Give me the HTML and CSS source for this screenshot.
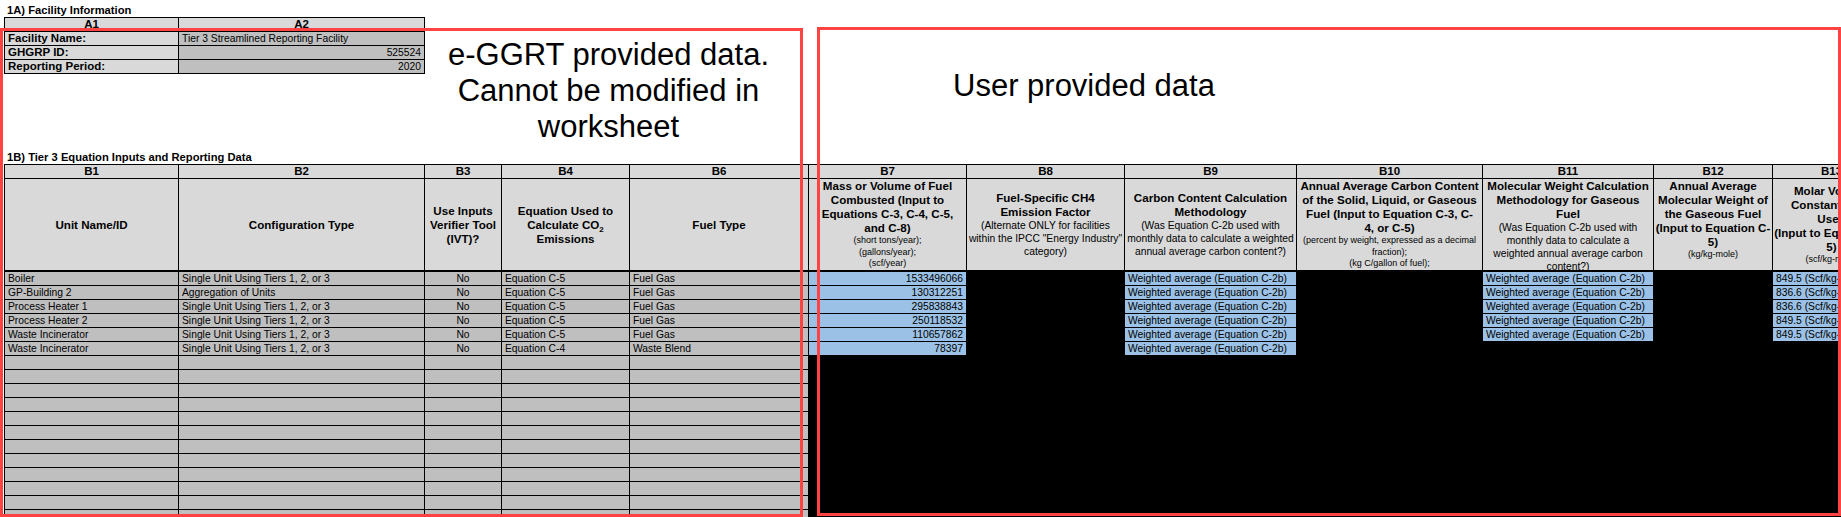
FILE: index.html
```html
<!DOCTYPE html>
<html lang="en">
<head>
<meta charset="utf-8">
<title>Tier 3 Equation Inputs and Reporting Data</title>
<link rel="stylesheet" href="styles.css">
</head>
<body>
<main class="sheet">
  <h2 class="section section-a">1A) Facility Information</h2>
  <table class="grid facility">
    <colgroup><col class="c1"><col class="c2"></colgroup>
    <tr><th class="code">A1</th><th class="code">A2</th></tr>
    <tr><th class="label">Facility Name:</th><td class="gray">Tier 3 Streamlined Reporting Facility</td></tr>
    <tr><th class="label">GHGRP ID:</th><td class="gray num">525524</td></tr>
    <tr><th class="label">Reporting Period:</th><td class="gray num">2020</td></tr>
  </table>

  <h2 class="section section-b">1B) Tier 3 Equation Inputs and Reporting Data</h2>
  <table class="grid data">
    <colgroup>
      <col class="c1"><col class="c2"><col class="c3"><col class="c4"><col class="c6"><col class="c7">
      <col class="c8"><col class="c9"><col class="c10"><col class="c11"><col class="c12"><col class="c13">
    </colgroup>
    <tr class="codes">
      <th class="code">B1</th><th class="code">B2</th><th class="code">B3</th><th class="code">B4</th><th class="code">B6</th><th class="code">B7</th>
      <th class="code">B8</th><th class="code">B9</th><th class="code">B10</th><th class="code">B11</th><th class="code">B12</th><th class="code">B13</th>
    </tr>
    <tr class="heads">
      <th><div class="head"><b>Unit Name/ID</b></div></th>
      <th><div class="head"><b>Configuration Type</b></div></th>
      <th><div class="head"><b>Use Inputs<br>Verifier Tool<br>(IVT)?</b></div></th>
      <th><div class="head"><b>Equation Used to<br>Calculate CO<sub>2</sub><br>Emissions</b></div></th>
      <th><div class="head"><b>Fuel Type</b></div></th>
      <th><div class="head top"><b>Mass or Volume of Fuel<br>Combusted (Input to<br>Equations C-3, C-4, C-5,<br>and C-8)</b><small>(short tons/year);<br>(gallons/year);<br>(scf/year)</small></div></th>
      <th><div class="head"><b>Fuel-Specific CH4<br>Emission Factor</b><span>(Alternate ONLY for facilities<br>within the IPCC "Energy Industry"<br>category)</span></div></th>
      <th><div class="head"><b>Carbon Content Calculation<br>Methodology</b><span>(Was Equation C-2b used with<br>monthly data to calculate a weighted<br>annual average carbon content?)</span></div></th>
      <th><div class="head top"><b>Annual Average Carbon Content<br>of the Solid, Liquid, or Gaseous<br>Fuel (Input to Equation C-3, C-<br>4, or C-5)</b><small>(percent by weight, expressed as a decimal<br>fraction);<br>(kg C/gallon of fuel);</small></div></th>
      <th><div class="head top"><b>Molecular Weight Calculation<br>Methodology for Gaseous<br>Fuel</b><span>(Was Equation C-2b used with<br>monthly data to calculate a<br>weighted annual average carbon<br>content?)</span></div></th>
      <th><div class="head top"><b>Annual Average<br>Molecular Weight of<br>the Gaseous Fuel<br>(Input to Equation C-<br>5)</b><small>(kg/kg-mole)</small></div></th>
      <th><div class="head"><b>Molar Volume<br>Constant to be<br>Used<br>(Input to Equation C-<br>5)</b><small>(scf/kg-mole)</small></div></th>
    </tr>
    <tr class="first">
      <td class="gray">Boiler</td><td class="gray">Single Unit Using Tiers 1, 2, or 3</td><td class="gray mid">No</td><td class="gray">Equation C-5</td><td class="gray">Fuel Gas</td>
      <td class="blue num">1533496066</td><td class="na"></td><td class="blue">Weighted average (Equation C-2b)</td><td class="na"></td><td class="blue">Weighted average (Equation C-2b)</td><td class="na"></td><td class="blue">849.5 (Scf/kg-mole)</td>
    </tr>
    <tr>
      <td class="gray">GP-Building 2</td><td class="gray">Aggregation of Units</td><td class="gray mid">No</td><td class="gray">Equation C-5</td><td class="gray">Fuel Gas</td>
      <td class="blue num">130312251</td><td class="na"></td><td class="blue">Weighted average (Equation C-2b)</td><td class="na"></td><td class="blue">Weighted average (Equation C-2b)</td><td class="na"></td><td class="blue">836.6 (Scf/kg-mole)</td>
    </tr>
    <tr>
      <td class="gray">Process Heater 1</td><td class="gray">Single Unit Using Tiers 1, 2, or 3</td><td class="gray mid">No</td><td class="gray">Equation C-5</td><td class="gray">Fuel Gas</td>
      <td class="blue num">295838843</td><td class="na"></td><td class="blue">Weighted average (Equation C-2b)</td><td class="na"></td><td class="blue">Weighted average (Equation C-2b)</td><td class="na"></td><td class="blue">836.6 (Scf/kg-mole)</td>
    </tr>
    <tr>
      <td class="gray">Process Heater 2</td><td class="gray">Single Unit Using Tiers 1, 2, or 3</td><td class="gray mid">No</td><td class="gray">Equation C-5</td><td class="gray">Fuel Gas</td>
      <td class="blue num">250118532</td><td class="na"></td><td class="blue">Weighted average (Equation C-2b)</td><td class="na"></td><td class="blue">Weighted average (Equation C-2b)</td><td class="na"></td><td class="blue">849.5 (Scf/kg-mole)</td>
    </tr>
    <tr>
      <td class="gray">Waste Incinerator</td><td class="gray">Single Unit Using Tiers 1, 2, or 3</td><td class="gray mid">No</td><td class="gray">Equation C-5</td><td class="gray">Fuel Gas</td>
      <td class="blue num">110657862</td><td class="na"></td><td class="blue">Weighted average (Equation C-2b)</td><td class="na"></td><td class="blue">Weighted average (Equation C-2b)</td><td class="na"></td><td class="blue">849.5 (Scf/kg-mole)</td>
    </tr>
    <tr>
      <td class="gray">Waste Incinerator</td><td class="gray">Single Unit Using Tiers 1, 2, or 3</td><td class="gray mid">No</td><td class="gray">Equation C-4</td><td class="gray">Waste Blend</td>
      <td class="blue num">78397</td><td class="na"></td><td class="blue">Weighted average (Equation C-2b)</td><td class="na" colspan="4"></td>
    </tr>
    <tr><td class="gray"></td><td class="gray"></td><td class="gray"></td><td class="gray"></td><td class="gray"></td><td class="na" colspan="7"></td></tr>
    <tr><td class="gray"></td><td class="gray"></td><td class="gray"></td><td class="gray"></td><td class="gray"></td><td class="na" colspan="7"></td></tr>
    <tr><td class="gray"></td><td class="gray"></td><td class="gray"></td><td class="gray"></td><td class="gray"></td><td class="na" colspan="7"></td></tr>
    <tr><td class="gray"></td><td class="gray"></td><td class="gray"></td><td class="gray"></td><td class="gray"></td><td class="na" colspan="7"></td></tr>
    <tr><td class="gray"></td><td class="gray"></td><td class="gray"></td><td class="gray"></td><td class="gray"></td><td class="na" colspan="7"></td></tr>
    <tr><td class="gray"></td><td class="gray"></td><td class="gray"></td><td class="gray"></td><td class="gray"></td><td class="na" colspan="7"></td></tr>
    <tr><td class="gray"></td><td class="gray"></td><td class="gray"></td><td class="gray"></td><td class="gray"></td><td class="na" colspan="7"></td></tr>
    <tr><td class="gray"></td><td class="gray"></td><td class="gray"></td><td class="gray"></td><td class="gray"></td><td class="na" colspan="7"></td></tr>
    <tr><td class="gray"></td><td class="gray"></td><td class="gray"></td><td class="gray"></td><td class="gray"></td><td class="na" colspan="7"></td></tr>
    <tr><td class="gray"></td><td class="gray"></td><td class="gray"></td><td class="gray"></td><td class="gray"></td><td class="na" colspan="7"></td></tr>
    <tr><td class="gray"></td><td class="gray"></td><td class="gray"></td><td class="gray"></td><td class="gray"></td><td class="na" colspan="7"></td></tr>
    <tr><td class="gray"></td><td class="gray"></td><td class="gray"></td><td class="gray"></td><td class="gray"></td><td class="na" colspan="7"></td></tr>
  </table>

  <aside class="callout callout-a">e-GGRT provided data.<br>Cannot be modified in<br>worksheet</aside>
  <aside class="callout callout-b">User provided data</aside>
</main>
</body>
</html>
```

FILE: styles.css
```css
html, body {
  margin: 0;
  height: 517px;
  overflow: hidden;
  background: #fff;
}

.sheet {
  position: relative;
  height: 517px;
  width: 1841px;
  overflow: hidden;
  padding-left: 4px;
  box-sizing: border-box;
  font-family: "Liberation Sans", Arial, sans-serif;
  color: #000;
}

.section {
  margin: 0;
  height: 14px;
  font-size: 11.2px;
  font-weight: bold;
  line-height: 14px;
  white-space: nowrap;
}

.section-a {
  padding: 3px 0 0 3px;
}

.section-b {
  margin-top: 76px;
  padding-left: 3px;
}

.grid {
  border-collapse: collapse;
  table-layout: fixed;
  font-size: 10.3px;
  line-height: 13px;
}

.grid th,
.grid td {
  border: 1px solid #000;
  height: 13px;
  padding: 0 3px;
  box-sizing: content-box;
  overflow: hidden;
  white-space: nowrap;
  text-align: left;
  font-weight: normal;
}

.facility { width: 420px; }
.data { width: 1886px; }

.c1 { width: 174px; }
.c2 { width: 246px; }
.c3 { width: 77px; }
.c4 { width: 128px; }
.c6 { width: 179px; }
.c7 { width: 158px; }
.c8 { width: 158px; }
.c9 { width: 172px; }
.c10 { width: 186px; }
.c11 { width: 171px; }
.c12 { width: 119px; }
.c13 { width: 118px; }

.grid th.code {
  background: #d9d9d9;
  font-weight: bold;
  font-size: 11.5px;
  text-align: center;
}

.grid th.label {
  background: #d9d9d9;
  font-weight: bold;
  font-size: 11.5px;
}

.grid td.gray { background: #bfbfbf; }
.grid td.blue { background: #9bc2e6; }
.grid td.na { background: #000; }
.grid td.num { text-align: right; }
.grid td.mid { text-align: center; }

.heads th {
  height: 91px;
  padding: 0;
  background: #d9d9d9;
}

.first td { border-top: 2px solid #000; }

.head {
  display: flex;
  flex-direction: column;
  justify-content: center;
  align-items: center;
  height: 91px;
  overflow: hidden;
  text-align: center;
  font-size: 10.3px;
  line-height: 13px;
}

.head.top { justify-content: flex-start; }

.head b {
  display: block;
  font-size: 11.6px;
  line-height: 14px;
}

.head small {
  display: block;
  font-size: 9px;
  line-height: 11.6px;
}

.head span { display: block; }

.head sub {
  font-size: 8px;
  line-height: 0;
}

.callout {
  position: absolute;
  box-sizing: border-box;
  border: 3px solid #ff4343;
  font-size: 31px;
  line-height: 36px;
  white-space: nowrap;
}

.callout-a {
  left: 0;
  top: 28px;
  width: 803px;
  height: 489px;
  padding: 6px 0 0 414px;
  text-align: center;
}

.callout-b {
  left: 817px;
  top: 27px;
  width: 1024px;
  height: 489px;
  padding: 38px 0 0 133px;
}
```
